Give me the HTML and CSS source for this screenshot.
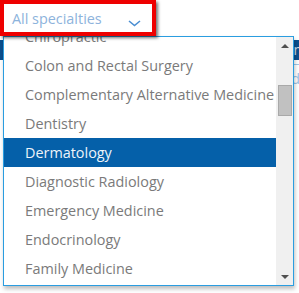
FILE: index.html
```html
<!DOCTYPE html>
<html>
<head>
<meta charset="utf-8">
<link rel="stylesheet" href="styles.css">
</head>
<body>
<div class="trigger">
  <span class="trigger-text">All specialties</span>
  <svg class="chev" width="13" height="7" viewBox="0 0 13 7"><polyline points="1,1 6.5,5.5 12,1" fill="none" stroke="#4a8ed2" stroke-width="1.6"/></svg>
</div>
<div class="page">
  <div class="bar"><span class="bar-text">n</span></div>
  <div class="panel"><span class="panel-text">d</span></div>
</div>
<div class="listbox">
  <div class="options">
    <ul class="list">
      <li>Chiropractic</li>
      <li>Colon and Rectal Surgery</li>
      <li>Complementary Alternative Medicine</li>
      <li>Dentistry</li>
      <li class="selected">Dermatology</li>
      <li>Diagnostic Radiology</li>
      <li>Emergency Medicine</li>
      <li>Endocrinology</li>
      <li>Family Medicine</li>
    </ul>
  </div>
  <div class="scrollbar">
    <div class="arrow up"></div>
    <div class="track"><div class="thumb"></div></div>
    <div class="arrow down"></div>
  </div>
</div>
</body>
</html>
```
FILE: styles.css
```css
html, body {
  margin: 0;
  padding: 0;
  background: #fff;
  width: 299px;
  height: 293px;
  overflow: hidden;
  font-family: "Open Sans", "Liberation Sans", sans-serif;
}
body { position: relative; }

.trigger {
  position: relative;
  z-index: 3;
  box-sizing: border-box;
  width: 156px;
  height: 36px;
  border: 4px solid #ee0000;
  background: #fff;
  box-shadow: 2px 2px 3px rgba(0,0,0,0.55);
  display: flex;
  align-items: center;
  padding: 0 0 0 8px;
}
.trigger-text {
  font-size: 14.4px;
  color: #8db3dc;
}
.chev {
  margin-left: 26px;
  margin-top: 10px;
}

.page {
  padding-top: 4px;
}
.bar {
  height: 20px;
  background: #0b4f8e;
  display: flex;
  justify-content: flex-end;
}
.bar-text {
  color: #cfe0f0;
  font-size: 14px;
  line-height: 20px;
  margin-right: -3px;
}
.panel {
  margin-top: 4px;
  margin-left: 280px;
  height: 26px;
  border-top: 1px solid #9cc8ea;
  border-left: 1px solid #9cc8ea;
  display: flex;
  align-items: center;
}
.panel-text {
  color: #9cc3e6;
  font-size: 15px;
  margin-left: 10px;
}

.listbox {
  position: absolute;
  z-index: 2;
  top: 36px;
  left: 3px;
  width: 291px;
  height: 250px;
  box-sizing: border-box;
  border: 1px solid #2a9de0;
  background: #fff;
  display: flex;
  box-shadow: 1px 3px 4px rgba(0,0,0,0.25);
}
.options {
  flex: 1;
  overflow: hidden;
}
.list {
  list-style: none;
  margin: -15px 0 0 0;
  padding: 0;
}
.list li {
  height: 29px;
  line-height: 29px;
  padding-left: 21px;
  font-size: 14.4px;
  color: #7a7a7a;
  white-space: nowrap;
}
.list li.selected {
  background: #0560a9;
  color: #eef4fa;
}

.scrollbar {
  width: 17px;
  background: #f0f0f0;
  display: flex;
  flex-direction: column;
}
.arrow {
  height: 17px;
  display: flex;
  align-items: center;
  justify-content: center;
}
.arrow::before {
  content: "";
  border-left: 4px solid transparent;
  border-right: 4px solid transparent;
}
.arrow.up::before { border-bottom: 4px solid #505050; }
.arrow.down::before { border-top: 4px solid #505050; }
.track {
  flex: 1;
  padding: 31px 1px 0 2px;
}
.thumb {
  height: 31px;
  background: #c1c1c1;
  border: 1px solid #a9a9a9;
  box-sizing: border-box;
}
```
